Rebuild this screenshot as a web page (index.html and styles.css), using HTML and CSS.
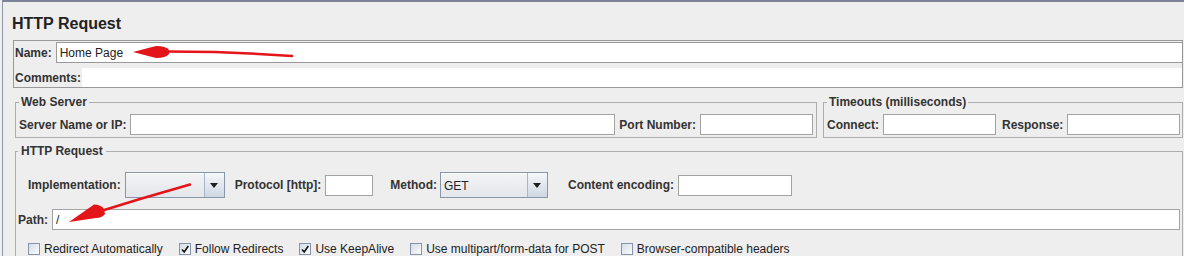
FILE: index.html
```html
<!DOCTYPE html>
<html lang="en">

<head>
  <meta charset="UTF-8">
  <title>HTTP Request</title>
  <link rel="stylesheet" href="styles.css">
</head>

<body>
  <div class="window">
    <h1 class="title">HTTP Request</h1>

    <div class="name-panel">
      <div class="name-row">
        <span class="lbl">Name:</span>
        <input class="field name-field" type="text" value="Home Page">
      </div>
      <div class="comments-row">
        <span class="lbl">Comments:</span>
        <div class="comments"></div>
      </div>
    </div>

    <div class="server-row">
      <fieldset class="group web-server">
        <legend>Web Server</legend>
        <div class="row">
          <span class="lbl">Server Name or IP:</span>
          <input class="field grow" type="text">
          <span class="lbl port-lbl">Port Number:</span>
          <input class="field w113" type="text">
        </div>
      </fieldset>
      <fieldset class="group timeouts">
        <legend>Timeouts (milliseconds)</legend>
        <div class="row">
          <span class="lbl">Connect:</span>
          <input class="field w113" type="text">
          <span class="lbl resp-lbl">Response:</span>
          <input class="field w113" type="text">
        </div>
      </fieldset>
    </div>

    <fieldset class="group http">
      <legend>HTTP Request</legend>
      <div class="row impl-row">
        <span class="lbl">Implementation:</span>
        <div class="combo impl-combo">
          <span class="combo-text"></span>
          <span class="combo-btn"></span>
        </div>
        <span class="lbl proto-lbl">Protocol [http]:</span>
        <input class="field proto-field" type="text">
        <span class="lbl method-lbl">Method:</span>
        <div class="combo method-combo">
          <span class="combo-text">GET</span>
          <span class="combo-btn"></span>
        </div>
        <span class="lbl enc-lbl">Content encoding:</span>
        <input class="field enc-field" type="text">
      </div>
      <div class="row path-row">
        <span class="lbl">Path:</span>
        <input class="field grow" type="text" value="/">
      </div>
      <div class="checks">
        <label class="check"><span class="box"></span>Redirect Automatically</label>
        <label class="check"><span class="box checked"><svg width="10" height="10" viewBox="0 0 10 10"><path d="M2 5.5 L4.2 8 L8.3 2" /></svg></span>Follow Redirects</label>
        <label class="check"><span class="box checked"><svg width="10" height="10" viewBox="0 0 10 10"><path d="M2 5.5 L4.2 8 L8.3 2" /></svg></span>Use KeepAlive</label>
        <label class="check"><span class="box"></span>Use multipart/form-data for POST</label>
        <label class="check"><span class="box"></span>Browser-compatible headers</label>
      </div>
    </fieldset>
  </div>

  <!-- red annotation arrows drawn over the screenshot -->
  <svg class="marks" width="1184" height="256" viewBox="0 0 1184 256">
    <path d="M133 52 L156 46 Q166 46 169 50 L169 54 Q166 58 156 58 Z" />
    <polyline points="166,51.5 215,52 250,53.5 292,56" />
    <path d="M69 222 L94 204.5 Q101 204.5 104 209 L105 214 Q102 218 96 218 Z" />
    <polyline points="101,211 140,199 190,184.5" />
  </svg>
</body>

</html>
```

FILE: styles.css
```css
* {
  box-sizing: border-box;
}

html,
body {
  margin: 0;
  padding: 0;
}

body {
  width: 1184px;
  height: 256px;
  overflow: hidden;
  position: relative;
  background-color: #eeeeee;
  font-family: "Liberation Sans", Arial, sans-serif;
  font-size: 12px;
  color: #333;
}

.window {
  height: 256px;
  margin-left: 2px;
  border-top: 2px solid #7c8297;
  border-left: 1px solid #8f96a8;
  padding: 0 1px 0 10px;
}

.title {
  margin: 0 0 0 -1px;
  padding-top: 12px;
  font-size: 16px;
  line-height: 20px;
  font-weight: bold;
  color: #222;
}

.lbl {
  font-weight: bold;
  white-space: nowrap;
  color: #333;
}

.field {
  height: 21px;
  margin: 0;
  padding: 0 3px;
  border: 1px solid #a3a3a3;
  border-radius: 0;
  background-color: #fff;
  font-family: "Liberation Sans", Arial, sans-serif;
  font-size: 12px;
  color: #222;
  outline: none;
}

.grow {
  flex: 1;
  min-width: 0;
}

.w113 {
  width: 113px;
}

/* name / comments panel */
.name-panel {
  margin-top: 6px;
  border: 1px solid #999;
  padding: 1px 0 0 1px;
}

.name-row,
.comments-row,
.row {
  display: flex;
  align-items: center;
}

.name-field {
  flex: 1;
  margin-left: 4px;
  border-color: #999;
  border-right: none;
}

.comments-row {
  margin-top: 5px;
}

.comments {
  flex: 1;
  height: 19px;
  margin-left: 1px;
  background-color: #fff;
}

/* titled groups */
.group {
  margin: 0;
  min-width: 0;
  border: 1px solid #adadad;
  padding: 5px 3px 2px 3px;
}

.group legend {
  padding: 0 2px;
  font-weight: bold;
  font-size: 12px;
  line-height: 14px;
  color: #333;
}

.server-row {
  display: flex;
  gap: 6px;
  margin: 7px 0 0 2px;
}

.web-server {
  flex: 1;
}

.web-server .lbl + .field {
  margin-left: 4px;
}

.port-lbl {
  margin-left: 4px;
}

.timeouts {
  width: 360px;
}

.timeouts .lbl + .field {
  margin-left: 4px;
}

.resp-lbl {
  margin-left: 6px;
}

.http {
  margin: 6px 0 0 2px;
  padding: 14px 2px 0 2px;
  height: 112px;
  border-bottom: none;
}

.http legend {
  padding: 0 3px;
}

.impl-row {
  height: 26px;
  padding-left: 10px;
}

.impl-row .lbl + * {
  margin-left: 4px;
}

.proto-lbl {
  margin-left: 10px;
}

.proto-field {
  width: 48px;
}

.method-lbl {
  margin-left: 17px;
}

.method-lbl + .combo {
  margin-left: 3px;
}

.enc-lbl {
  margin-left: 20px;
}

.enc-field {
  width: 114px;
}

.path-row {
  margin-top: 11px;
}

.path-row .field {
  margin-left: 4px;
}

/* combo boxes */
.combo {
  display: flex;
  height: 26px;
  border: 1px solid #8896a8;
  background: linear-gradient(#f3f4f6, #e3e6ea);
}

.impl-combo {
  width: 100px;
}

.method-combo {
  width: 108px;
}

.combo-text {
  flex: 1;
  padding-left: 3px;
  line-height: 24px;
  border-top: 1px solid #fafbfc;
  color: #222;
}

.combo-btn {
  width: 20px;
  display: flex;
  align-items: center;
  justify-content: center;
  border-left: 1px solid #a9b5c4;
  background: linear-gradient(#f6f8fb, #cdd7e2);
}

.combo-btn::after {
  content: "";
  border-left: 4px solid transparent;
  border-right: 4px solid transparent;
  border-top: 5px solid #1e1e1e;
}

/* checkboxes */
.checks {
  display: flex;
  align-items: center;
  height: 16px;
  margin-top: 11px;
  padding-left: 10px;
}

.check {
  display: flex;
  align-items: center;
  margin-right: 16px;
  color: #222;
  white-space: nowrap;
}

.box {
  width: 12px;
  height: 12px;
  margin-right: 4px;
  display: flex;
  align-items: center;
  justify-content: center;
  border: 1px solid #8594aa;
  background: linear-gradient(135deg, #d3dce7, #fbfcfd);
}

.box svg path {
  fill: none;
  stroke: #111;
  stroke-width: 1.6;
}

/* annotation overlay */
.marks {
  position: absolute;
  left: 0;
  top: 0;
  pointer-events: none;
}

.marks path {
  fill: #e3141a;
}

.marks polyline {
  fill: none;
  stroke: #e3141a;
  stroke-width: 2.5;
  stroke-linecap: round;
  stroke-linejoin: round;
}
```
